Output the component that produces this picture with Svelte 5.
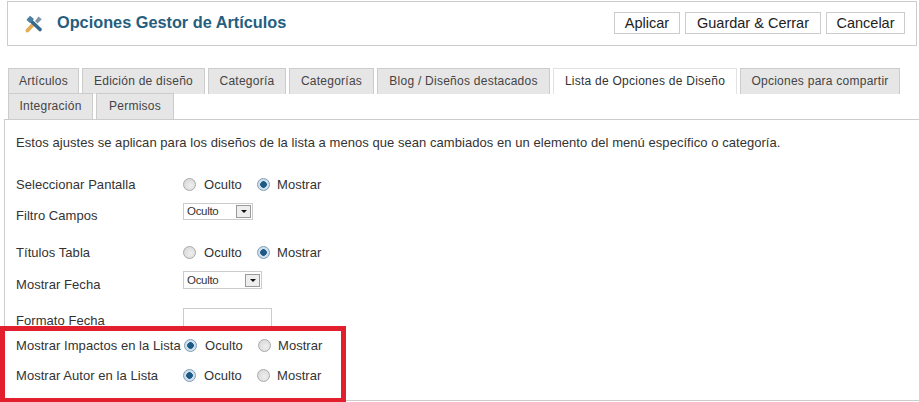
<script>
  const tabs1 = [
    { t: 'Artículos', w: 71 }, { t: 'Edición de diseño', w: 123 }, { t: 'Categoría', w: 78 },
    { t: 'Categorías', w: 85 }, { t: 'Blog / Diseños destacados', w: 173 },
    { t: 'Lista de Opciones de Diseño', w: 184, active: true }, { t: 'Opciones para compartir', w: 160 }
  ];
  const tabs2 = [{ t: 'Integración', w: 85 }, { t: 'Permisos', w: 78 }];
  const buttons = [{ t: 'Aplicar', w: 66 }, { t: 'Guardar & Cerrar', w: 136 }, { t: 'Cancelar', w: 79 }];
</script>

{#snippet radio(on)}
  <span class="radio" class:on></span>
{/snippet}

{#snippet radios(first, second)}
  <div class="radios">
    {@render radio(first)}<span class="opt first">Oculto</span>
    {@render radio(second)}<span class="opt">Mostrar</span>
  </div>
{/snippet}

{#snippet select(w)}
  <div class="select" style="width:{w}px">
    <span>Oculto</span>
    <span class="arrow"><i></i></span>
  </div>
{/snippet}

<div class="page">
  <header class="head">
    <div class="title">
      <svg width="18" height="18" viewBox="0 0 18 18">
        <path d="M2.5 15.5 L8.5 9" stroke="#e5ab55" stroke-width="3.8" stroke-linecap="round" />
        <path d="M4.5 4.5 L15 14.5" stroke="#34688c" stroke-width="3.6" stroke-linecap="round" />
        <path d="M1.5 5 L5 .8 L9 4 L5 8 Z" fill="#4a7fa3" />
        <path d="M10 6 L13.5 1.5 L16.8 4.2 L12.5 8.5 Z" fill="#7f97a8" />
      </svg>
      <h1>Opciones Gestor de Artículos</h1>
    </div>
    <div class="actions">
      {#each buttons as b}
        <button style="width:{b.w}px">{b.t}</button>
      {/each}
    </div>
  </header>

  <nav class="tabs">
    <div class="row r1">
      {#each tabs1 as tab}
        <div class="tab" class:active={tab.active} style="width:{tab.w}px">{tab.t}</div>
      {/each}
    </div>
    <div class="row r2">
      {#each tabs2 as tab}
        <div class="tab" style="width:{tab.w}px">{tab.t}</div>
      {/each}
    </div>
  </nav>

  <section class="panel">
    <p>Estos ajustes se aplican para los diseños de la lista a menos que sean cambiados en un elemento del menú específico o categoría.</p>

    <div class="field"><span class="label">Seleccionar Pantalla</span>{@render radios(false, true)}</div>
    <div class="field f2"><span class="label low">Filtro Campos</span><div class="up">{@render select(70)}</div></div>
    <div class="field f3"><span class="label">Títulos Tabla</span>{@render radios(false, true)}</div>
    <div class="field f4"><span class="label low">Mostrar Fecha</span><div class="up">{@render select(79)}</div></div>
    <div class="field f5"><span class="label low">Formato Fecha</span><div class="input"></div></div>
    <div class="field f6"><span class="label">Mostrar Impactos en la Lista</span><div class="shift">{@render radios(true, false)}</div></div>
    <div class="field f7"><span class="label">Mostrar Autor en la Lista</span>{@render radios(true, false)}</div>
  </section>

  <div class="mark"></div>
</div>

<style>
  :global(body) { margin: 0; background: #fff; }
  .page {
    position: relative;
    width: 919px;
    height: 402px;
    overflow: hidden;
    font-family: "Liberation Sans", Arial, sans-serif;
    font-size: 13px;
    color: #333;
    box-sizing: border-box;
    padding-top: 1px;
  }
  .head {
    box-sizing: border-box;
    margin-left: 7px;
    width: 910px;
    height: 45px;
    border: 1px solid #ccc;
    display: flex;
    justify-content: space-between;
    align-items: flex-start;
    padding: 10px 11px 0 17px;
  }
  .title { display: flex; align-items: center; gap: 14px; height: 20px; }
  .title svg { flex: none; margin-top: 3px; }
  h1 {
    margin: 0;
    font-size: 16.3px;
    font-weight: bold;
    color: #255e7e;
    line-height: 20px;
  }
  .actions { display: flex; gap: 5px; }
  button {
    box-sizing: border-box;
    height: 22px;
    padding: 0;
    background: #fff;
    border: 1px solid #ccc;
    border-radius: 0;
    font: 14.5px "Liberation Sans", Arial, sans-serif;
    color: #222;
    margin: 0;
    white-space: nowrap;
  }
  .tabs { margin-top: 22px; padding-left: 8px; }
  .row { display: flex; gap: 3px; height: 25px; }
  .r2 { height: 26px; }
  .tab {
    box-sizing: border-box;
    height: 26px;
    background: #e6e6e6;
    border: 1px solid #ccc;
    border-bottom: 0;
    text-align: center;
    line-height: 24px;
    font-size: 12px;
    letter-spacing: 0.25px;
    color: #444;
    white-space: nowrap;
  }
  .tab.active { background: #fff; border-color: #e2e2e2; color: #333; }
  .panel {
    box-sizing: border-box;
    margin-left: 4px;
    height: 282px;
    border-top: 1px solid #ccc;
    border-left: 1px solid #ccc;
    border-bottom: 1px solid #ccc;
    padding-left: 11px;
  }
  p {
    margin: 0;
    padding-top: 15px;
    height: 39px;
    line-height: 16px;
    letter-spacing: 0.05px;
    white-space: nowrap;
  }
  .field { display: flex; align-items: center; height: 20px; }
  .label { width: 167px; flex: none; letter-spacing: 0.05px; white-space: nowrap; }
  .low { position: relative; top: 1px; }
  .up { position: relative; top: -3px; }
  .f2 { margin-top: 10px; }
  .f3 { margin-top: 18px; }
  .f4 { margin-top: 11px; }
  .f5 { margin-top: 16px; }
  .f6 { margin-top: 6px; }
  .f7 { margin-top: 10px; }
  .f4 .select { height: 18px; }
  .shift { margin-left: 1px; }
  .radios { display: flex; align-items: center; letter-spacing: 0.05px; }
  .opt { margin-left: 7px; }
  .opt.first { margin-left: 8px; width: 53px; }
  .radio {
    box-sizing: border-box;
    width: 13px;
    height: 13px;
    border-radius: 50%;
    background: radial-gradient(circle at 60% 60%, #eee, #d4d4d4);
    border: 1px solid #a9a9a9;
    flex: none;
  }
  .radio.on {
    background: radial-gradient(circle, #1d5a85 0 3px, #cfe0ec 3.6px);
    border-color: #7e9db5;
  }
  .select {
    box-sizing: border-box;
    height: 17px;
    border: 1px solid #ccc;
    display: flex;
    justify-content: space-between;
    align-items: center;
    padding: 0 1px 0 3px;
    font-size: 11.5px;
    letter-spacing: -0.3px;
    color: #333;
  }
  .arrow {
    width: 15px;
    height: 13px;
    background: #eee;
    border: 1px solid #9a9a9a;
    box-sizing: border-box;
    display: flex;
    align-items: center;
    justify-content: center;
  }
  .arrow i {
    width: 0; height: 0;
    border-left: 3px solid transparent;
    border-right: 3px solid transparent;
    border-top: 3px solid #111;
  }
  .input { box-sizing: border-box; width: 89px; height: 20px; border: 1px solid #ccc; position: relative; top: -1px; }
  .mark {
    position: absolute;
    box-sizing: border-box;
    left: 0; top: 326px;
    width: 346px; height: 76px;
    border: 5px solid #e21f2d;
    border-bottom-width: 4px;
  }
</style>
